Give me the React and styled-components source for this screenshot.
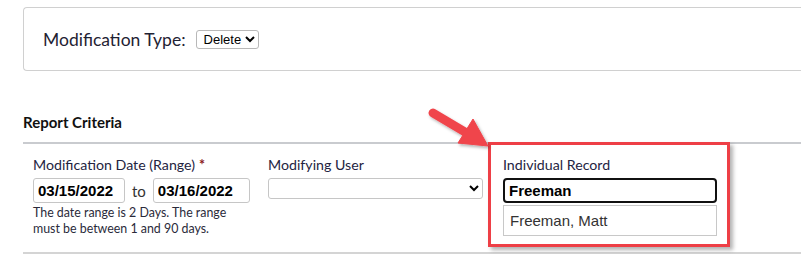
import React from 'react';
import styled, { createGlobalStyle } from 'styled-components';

const GlobalStyle = createGlobalStyle`
  html, body {
    margin: 0;
    padding: 0;
    background: #fff;
    overflow: hidden;
  }
  body {
    font-family: "Lato", "Liberation Sans", sans-serif;
    color: #222;
  }
`;

const Page = styled.div`
  position: relative;
  width: 840px;
  padding: 7px 0 0 23px;
`;

const TypeCard = styled.div`
  display: flex;
  align-items: center;
  gap: 10px;
  height: 64px;
  padding: 0 0 0 19px;
  border: 1px solid #d0d0d0;
  border-right: none;
  border-radius: 4px 0 0 4px;
  box-sizing: border-box;
`;

const TypeLabel = styled.span`
  font-size: 17.5px;
  color: #1f2233;
`;

const SmallSelect = styled.select`
  font-family: "Liberation Sans", Arial, sans-serif;
  font-size: 13px;
  height: 19px;
  padding: 0 0 0 3px;
  border: 1px solid #b8b8b8;
  border-radius: 3px;
  background: #fff;
  color: #000;
`;

const SectionTitle = styled.h2`
  margin: 39px 0 0;
  font-size: 15px;
  font-weight: 700;
  color: #111;
  line-height: 24px;
`;

const Criteria = styled.div`
  display: grid;
  grid-template-columns: 215px 215px 215px;
  align-items: start;
  column-gap: 20px;
  margin-top: 8px;
  padding: 12px 0 15px 10px;
  border-top: 2px solid #c9cbcf;
  border-bottom: 2px solid #d4d4d4;
`;

const Field = styled.div`
  position: relative;
  display: flex;
  flex-direction: column;
  gap: 4px;

  ${(p) =>
    p.$highlight &&
    `
    &::after {
      content: '';
      position: absolute;
      left: -15px;
      top: -14px;
      right: -12px;
      bottom: -11px;
      border: 3px solid #ee3f46;
      box-shadow: 3px 3px 4px rgba(0, 0, 0, 0.3);
      pointer-events: none;
    }
  `}
`;

const Label = styled.label`
  font-size: 14.2px;
  line-height: 18px;
  color: #24243f;
`;

const Required = styled.span`
  color: #8b1a1a;
  font-weight: 700;
  margin-left: 4px;
`;

const DateRow = styled.div`
  display: flex;
  align-items: center;
  gap: 7px;
  font-size: 15px;
  color: #333;
`;

const DateInput = styled.input`
  width: ${(p) => p.$w}px;
  height: 25px;
  box-sizing: border-box;
  padding: 0 4px;
  font-family: "Liberation Sans", Arial, sans-serif;
  font-size: 15px;
  font-weight: 700;
  color: #000;
  border: 1px solid #c6c6c6;
  border-radius: 3px;
`;

const Help = styled.p`
  margin: -2px 0 0;
  font-size: 12.4px;
  line-height: 16px;
  color: #2a2a3a;
  width: 215px;
`;

const WideSelect = styled.select`
  width: 215px;
  height: 21px;
  border: 1px solid #c6c6c6;
  border-radius: 3px;
  background: #fff;
`;

const SearchInput = styled.input`
  width: 214px;
  height: 25px;
  box-sizing: border-box;
  padding: 0 4px;
  font-family: "Liberation Sans", Arial, sans-serif;
  font-size: 15px;
  font-weight: 700;
  color: #000;
  border: 2px solid #111;
  border-radius: 4px;
  outline: none;
`;

const Suggestion = styled.div`
  width: 214px;
  height: 31px;
  box-sizing: border-box;
  margin-top: -2px;
  padding: 0 6px;
  display: flex;
  align-items: center;
  font-family: "Liberation Sans", Arial, sans-serif;
  font-size: 15px;
  color: #333;
  border: 1px solid #c8c8c8;
`;

const Arrow = styled.svg`
  position: absolute;
  left: 425px;
  top: 104px;
  overflow: visible;
  pointer-events: none;
`;

const PointerArrow = () => (
  <Arrow width="70" height="48" viewBox="0 0 70 48">
    <defs>
      <filter id="sh" x="-20%" y="-20%" width="150%" height="150%">
        <feDropShadow dx="1.5" dy="2" stdDeviation="1.5" floodColor="#000" floodOpacity="0.3" />
      </filter>
    </defs>
    <g filter="url(#sh)" fill="#f0454c" stroke="#f0454c">
      <line x1="8" y1="9" x2="40" y2="28" strokeWidth="9" strokeLinecap="round" />
      <polygon points="33,39 48,15 63,42" strokeWidth="1" strokeLinejoin="round" />
    </g>
  </Arrow>
);

export default function App() {
  return (
    <>
      <GlobalStyle />
      <Page>
        <TypeCard>
          <TypeLabel>Modification Type:</TypeLabel>
          <SmallSelect defaultValue="Delete">
            <option>Delete</option>
            <option>Add</option>
            <option>Edit</option>
          </SmallSelect>
        </TypeCard>

        <SectionTitle>Report Criteria</SectionTitle>

        <Criteria>
          <Field>
            <Label>
              Modification Date (Range)<Required>*</Required>
            </Label>
            <DateRow>
              <DateInput $w={92} defaultValue="03/15/2022" />
              to
              <DateInput $w={97} defaultValue="03/16/2022" />
            </DateRow>
            <Help>The date range is 2 Days. The range must be between 1 and 90 days.</Help>
          </Field>

          <Field>
            <Label>Modifying User</Label>
            <WideSelect>
              <option></option>
            </WideSelect>
          </Field>

          <Field $highlight>
            <Label>Individual Record</Label>
            <SearchInput defaultValue="Freeman" />
            <Suggestion>Freeman, Matt</Suggestion>
          </Field>
        </Criteria>

        <PointerArrow />
      </Page>
    </>
  );
}
